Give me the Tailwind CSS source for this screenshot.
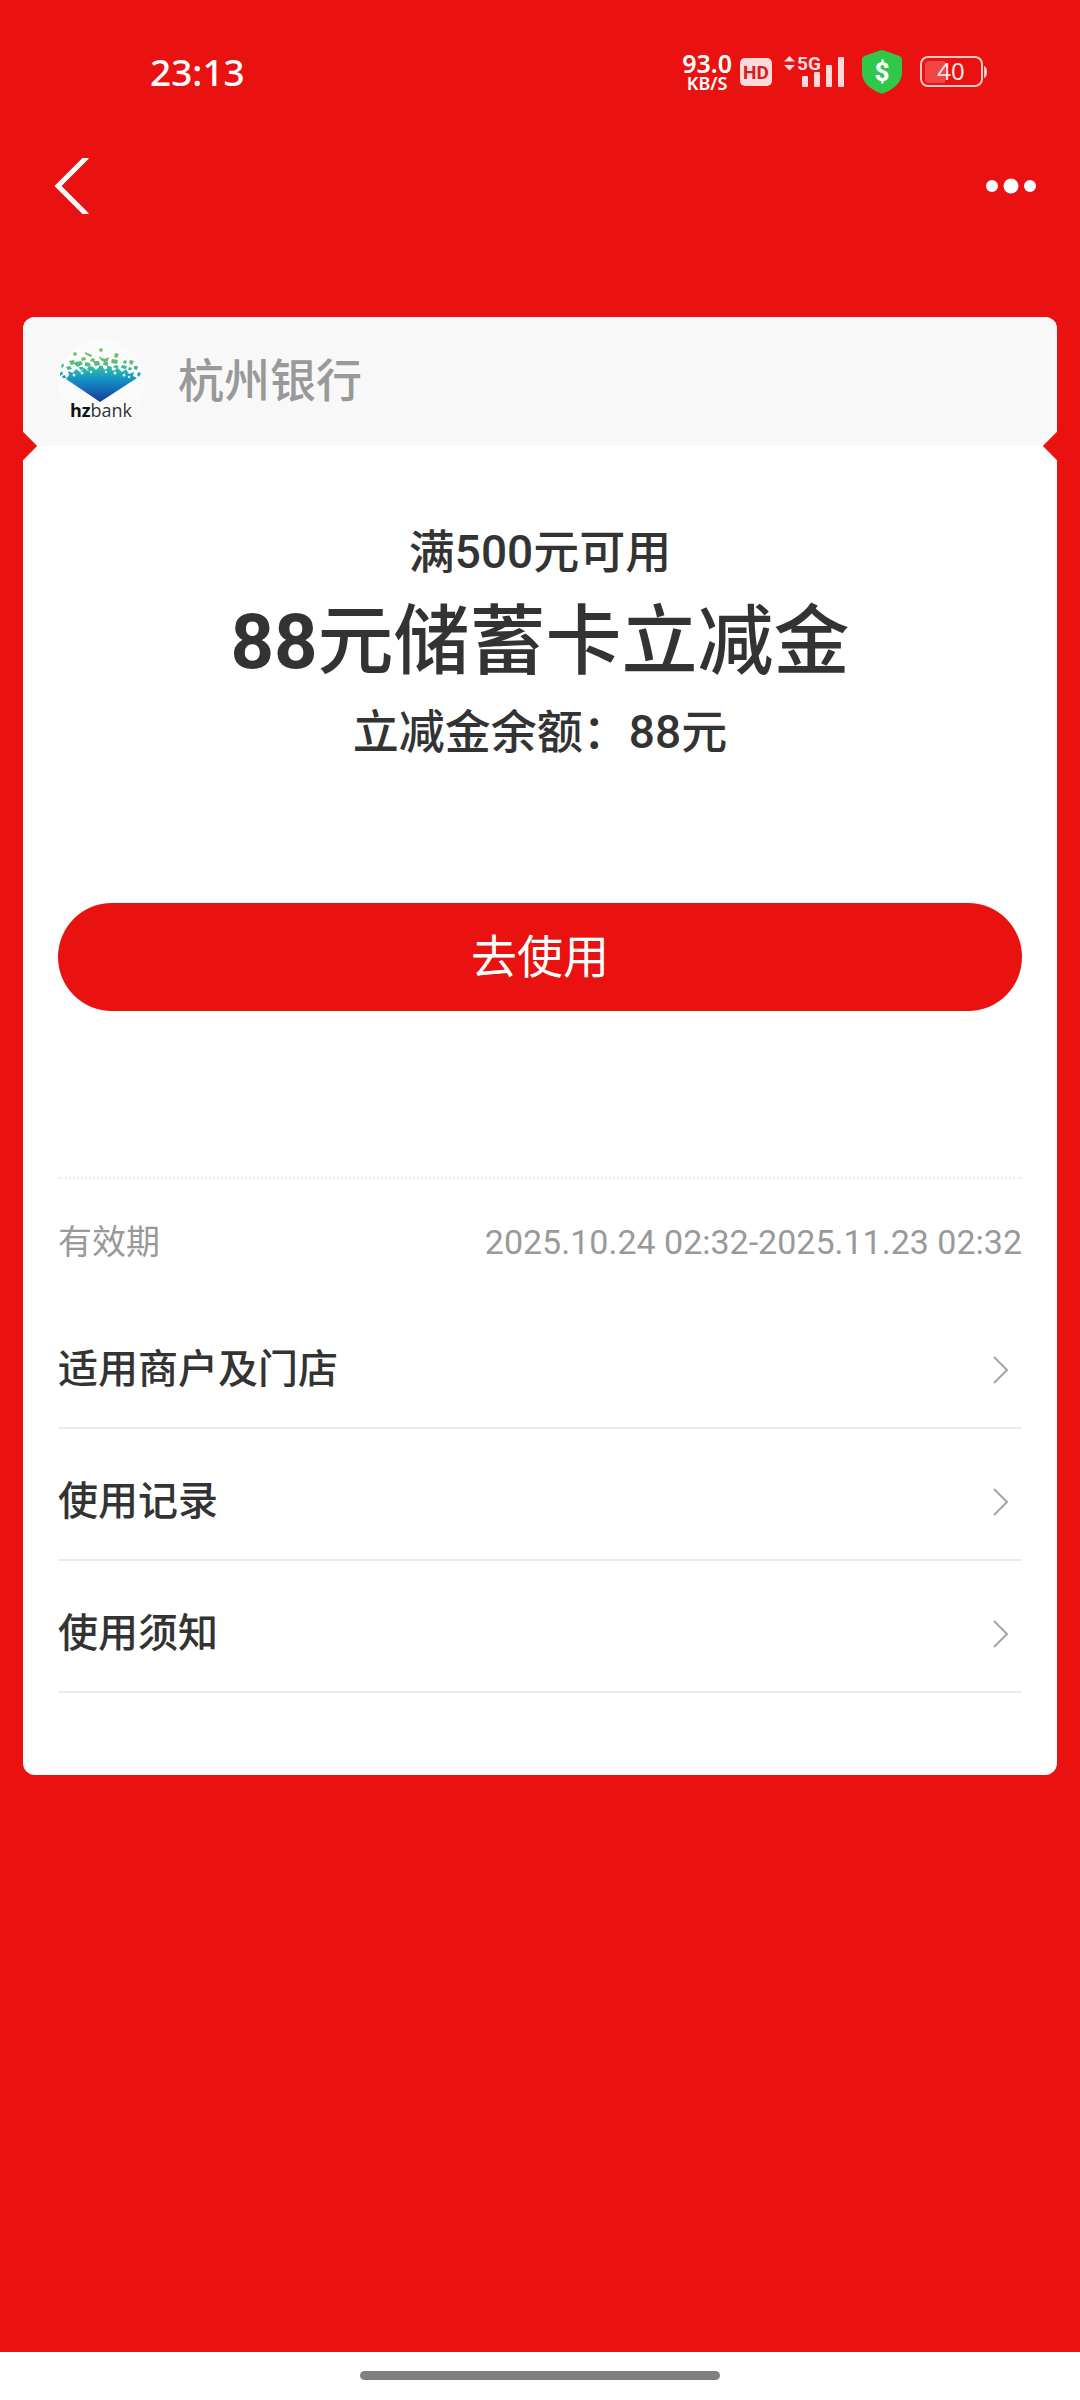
<!DOCTYPE html>
<html lang="zh-CN">
  <head>
    <meta charset="UTF-8" />
    <meta name="viewport" content="width=device-width, initial-scale=1.0" />
    <title>88元储蓄卡立减金</title>
    <script src="https://cdn.jsdelivr.net/npm/@tailwindcss/browser@4"></script>
    <style>
      body {
        font-family: Roboto, "Noto Sans CJK SC", sans-serif;
      }
    </style>
  </head>
  <body class="bg-[#e91210] text-[#333] min-h-screen flex flex-col">
    <!-- status bar -->
    <div class="h-[144px] pl-[150px] pr-[92px] flex items-center justify-between text-white">
      <span class="font-['Noto_Sans'] font-medium text-[37px]">23:13</span>
      <div class="flex items-center">
        <div class="flex flex-col items-center font-['Noto_Sans'] font-semibold mr-2">
          <span class="text-[25px] leading-[22px]">93.0</span>
          <span class="text-[18px] leading-[18px]">KB/S</span>
        </div>
        <svg class="w-8 h-7 mr-3" viewBox="0 0 32 28">
          <rect width="32" height="28" rx="5" fill="#ffdada" />
          <text x="16" y="21" text-anchor="middle" font-family="Roboto" font-weight="700" font-size="19" fill="#d3201d">HD</text>
        </svg>
        <svg class="w-[60px] h-9 mr-[18px]" viewBox="0 0 60 36" fill="#ffdada">
          <path d="M0 7.500L5.500 2L11 7.500ZM0 11L5.500 16.500L11 11Z" />
          <text x="13" y="16" font-family="Roboto" font-weight="700" font-size="19">5G</text>
          <rect x="18" y="22" width="6" height="11" rx="1" />
          <rect x="30" y="18" width="6" height="15" rx="1" />
          <rect x="42" y="11" width="6" height="22" rx="1" />
          <rect x="54" y="3" width="6" height="30" rx="1" />
        </svg>
        <svg class="w-10 h-11 mr-[18px]" viewBox="0 0 40 44">
          <path d="M20 0C21 0 35 5 37.500 6C39.500 7 40 8 40 10V23C40 33 30 40 22 43Q20 44 18 43C10 40 0 33 0 23V10C0 8 .5 7 2.500 6C5 5 19 0 20 0Z" fill="#2fc84b" />
          <text x="20" y="31" text-anchor="middle" font-family="Roboto" font-weight="800" font-size="26" fill="#fff">$</text>
        </svg>
        <svg class="w-[68px] h-8" viewBox="0 0 68 32">
          <path d="M5 9Q5 5 9 5H25V27H9Q5 27 5 23Z" fill="#f04745" />
          <rect x="1" y="1" width="61" height="29" rx="7" fill="none" stroke="#ffc9c8" stroke-width="2" />
          <path d="M64 10Q67 11 67 16T64 22Z" fill="#ffc9c8" />
          <text x="31" y="24" text-anchor="middle" font-family="Noto Sans" font-size="24" fill="#ffe6e5">40</text>
        </svg>
      </div>
    </div>

    <!-- navigation -->
    <header class="h-[84px] mb-[89px] pl-[54px] pr-[44px] flex items-center justify-between">
      <button type="button" aria-label="返回">
        <svg class="w-9 h-14" viewBox="0 0 36 56" fill="none" stroke="#fff" stroke-width="5">
          <path d="M33 -1L4 28L33 57" />
        </svg>
      </button>
      <button type="button" aria-label="更多">
        <svg class="w-[50px] h-4" viewBox="0 0 50 16" fill="#fff">
          <circle cx="6" cy="8" r="6" />
          <circle cx="25" cy="8" r="7.500" />
          <circle cx="44" cy="8" r="6" />
        </svg>
      </button>
    </header>

    <!-- coupon card -->
    <main class="mx-[23px] bg-white rounded-xl pb-[82px]">
      <div class="relative h-[129px] bg-[#f8f8f8] rounded-t-xl pl-[34px] flex items-center">
        <span class="absolute -left-[10px] -bottom-[10px] size-5 rotate-45 bg-[#e91210]"></span>
        <span class="absolute -right-[10px] -bottom-[10px] size-5 rotate-45 bg-[#e91210]"></span>
        <svg class="size-[88px] mr-[33px]" viewBox="0 0 88 88" role="img" aria-label="hzbank">
          <defs>
            <linearGradient id="gem" gradientUnits="userSpaceOnUse" x1="0" y1="10" x2="0" y2="64">
              <stop offset="0" stop-color="#7fc241" />
              <stop offset=".28" stop-color="#5bbd7c" />
              <stop offset=".42" stop-color="#25b3b4" />
              <stop offset=".6" stop-color="#128fc8" />
              <stop offset="1" stop-color="#173a94" />
            </linearGradient>
          </defs>
          <circle cx="44" cy="44" r="43" fill="#fbfbfb" />
          <g fill="url(#gem)">
            <path d="M9 41L12 37L11 33L16 35L19 31L23 34L27 30L31 33L35 28L39 32L44 27L48 32L53 28L56 33L61 30L65 34L69 31L72 36L77 34L76 38L80 40L43 64Z" />
            <path d="M43 10l3 1-1 3-3-1ZM17 14l3 1-1 3-3-1ZM28 14l7 3-1 2-6-3ZM42 18q5 5 10 1l-1 4q-5 2-8-2ZM58 15l4 1-2 4-3-1ZM24 20l4-1 1 3-4 1ZM35 20l3 1-1 3-4-1ZM55 21l6 1-1 4-6-1ZM67 22l3 1-1 3-3-1ZM73 22l4 1-2 4-3-2ZM12 23l5-1 1 4-4 1ZM18 24l6-1 2 3-5 3-3-2ZM28 24l5 1 1 4-6-1ZM36 23l6 0 1 4-5 1ZM47 23l4 1 0 4-5-1ZM4 28l2-3 1 3-2 2ZM9 29l4-1 2 3-4 1ZM65 27l5 1-1 3-5-1ZM77 28l4 0-1 4-3-1ZM3 35l2-2 1 3-3 2ZM81 34l3 1-2 4-2-2ZM5 38l3-1 1 3-3 0ZM22 29l4 0 1 2-4 1ZM58 27l4 1-2 3-4-2Z" />
            <path d="M72 29l3 1-1 2-3 0ZM42 28l4 0 0 3-4 1ZM31 29l4 0-1 3-4 0ZM50 28l5 1-1 3-4-1Z" />
          </g>
          <g fill="#e8f7ee">
            <circle cx="17" cy="37" r="1.500" />
            <circle cx="25" cy="35" r="1.500" />
            <circle cx="34" cy="34" r="1.200" />
            <circle cx="49" cy="34" r="1.200" />
            <circle cx="58" cy="35" r="1.500" />
            <circle cx="67" cy="37" r="1.500" />
            <circle cx="72" cy="39" r="1.200" />
          </g>
          <text x="44" y="79" text-anchor="middle" font-family="Open Sans" font-size="18" fill="#333"><tspan font-weight="700" fill="#111">hz</tspan>bank</text>
        </svg>
        <span class="text-[46px] font-medium text-[#999]">杭州银行</span>
      </div>

      <div class="px-[35px]">
        <div class="pt-[73px] flex flex-col items-center text-center font-medium">
          <p class="text-[46px] leading-[66px]">满500元可用</p>
          <h1 class="text-[76px] leading-[114px] font-medium"><span class="font-bold">88</span>元储蓄卡立减金</h1>
          <p class="text-[46px] leading-[66px]">立减金余额：88元</p>
        </div>

        <button type="button" class="mt-[138px] w-full h-[108px] rounded-full bg-[#e91210] text-white text-[46px]">
          去使用
        </button>

        <div class="mt-[166px] border-t-2 border-dotted border-[#eee] h-[120px] pt-2 flex items-center justify-between text-[34px] text-[#999]">
          <span>有效期</span>
          <span>2025.10.24 02:32-2025.11.23 02:32</span>
        </div>

        <!-- links -->
        <nav class="text-[40px] font-medium">
          <a href="#" class="h-[132px] pt-4 pr-[13px] flex items-center justify-between border-b-2 border-[#ebebeb]">
            适用商户及门店
            <svg class="w-4 h-7" viewBox="0 0 16 28" fill="none" stroke="#a5a5a5" stroke-width="2"><path d="M1 1L14 14L1 27" /></svg>
          </a>
          <a href="#" class="h-[132px] pt-4 pr-[13px] flex items-center justify-between border-b-2 border-[#ebebeb]">
            使用记录
            <svg class="w-4 h-7" viewBox="0 0 16 28" fill="none" stroke="#a5a5a5" stroke-width="2"><path d="M1 1L14 14L1 27" /></svg>
          </a>
          <a href="#" class="h-[132px] pt-4 pr-[13px] flex items-center justify-between border-b-2 border-[#ebebeb]">
            使用须知
            <svg class="w-4 h-7" viewBox="0 0 16 28" fill="none" stroke="#a5a5a5" stroke-width="2"><path d="M1 1L14 14L1 27" /></svg>
          </a>
        </nav>
      </div>
    </main>

    <!-- home indicator -->
    <footer class="mt-auto h-12 pb-[2px] bg-white flex items-center justify-center">
      <div class="w-1/3 h-[9px] rounded-full bg-[#808080]"></div>
    </footer>
  </body>
</html>
